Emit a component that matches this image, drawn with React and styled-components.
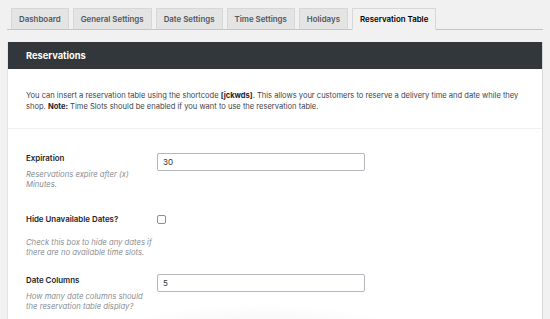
import React from "react";
import styled, { createGlobalStyle } from "styled-components";

const Global = createGlobalStyle`
  html, body { margin: 0; padding: 0; }
  body {
    background: #f1f1f1;
    font-family: Inter, "Open Sans", Roboto, sans-serif;
    color: #3c434a;
    width: 550px;
    height: 319px;
    overflow: hidden;
  }
`;

const Page = styled.div`
  padding: 8px 7px 0 7px;
`;

const TabBar = styled.div`
  display: flex;
  gap: 4px;
  padding-left: 4px;
  border-bottom: 1px solid #c3c4c7;
  height: 21px;
`;

const Tab = styled.div`
  box-sizing: border-box;
  height: 22px;
  padding: 0 7px;
  display: flex;
  align-items: center;
  font-size: 7.9px;
  font-weight: 600;
  border: 1px solid #d6d7d9;
  border-bottom-color: ${(p) => (p.$active ? "#f1f1f1" : "#c3c4c7")};
  background: ${(p) => (p.$active ? "#f1f1f1" : "#e4e4e4")};
  color: ${(p) => (p.$active ? "#000" : "#50575e")};
  white-space: nowrap;
`;

const Panel = styled.div`
  position: relative;
  margin-top: 12px;
  width: 536px;
  height: 400px;
  box-sizing: border-box;
  background: #fff;
  border-left: 1px solid #e2e4e7;
  border-right: 1px solid #d6d7d9;
  &::after {
    content: "";
    position: absolute;
    left: 0;
    right: 0;
    top: 232px;
    height: 60px;
    background: radial-gradient(ellipse 150px 30px at 250px 60px, rgba(0,0,0,0.05), rgba(0,0,0,0));
    pointer-events: none;
  }
`;

const Header = styled.div`
  height: 27px;
  background: #32373c;
  display: flex;
  align-items: center;
  padding-left: 18px;
  color: #fff;
  font-size: 9.3px;
  font-weight: 700;
`;

const Intro = styled.div`
  padding: 21px 18px 16px 18px;
  border-bottom: 1px solid #f0f0f1;
  font-size: 7.55px;
  line-height: 11px;
  color: #3c434a;
  b { font-weight: 700; color: #1d2327; }
`;

const Row = styled.div`
  display: grid;
  grid-template-columns: 131px 208px;
  padding: ${(p) => p.$top}px 18px 0 18px;
  align-items: start;
`;

const LabelCell = styled.div`
  display: flex;
  flex-direction: column;
`;

const Label = styled.div`
  font-size: 7.9px;
  line-height: 10px;
  font-weight: 600;
  color: #1d2327;
  margin-top: ${(p) => p.$offset || 0}px;
`;

const Desc = styled.div`
  margin-top: ${(p) => p.$gap}px;
  font-size: 7.7px;
  line-height: 9.5px;
  font-style: italic;
  color: #8a8d92;
  width: 126px;
`;

const Input = styled.div`
  box-sizing: border-box;
  height: 18px;
  border: 1px solid #b4b7bb;
  border-radius: 2px;
  display: flex;
  align-items: center;
  padding-left: 5px;
  font-size: 8px;
  color: #2c3338;
`;

const Checkbox = styled.div`
  box-sizing: border-box;
  width: 9px;
  height: 9px;
  margin-top: 1px;
  border: 1px solid #8c8f94;
  border-radius: 2px;
  background: #fff;
`;

const tabs = [
  "Dashboard",
  "General Settings",
  "Date Settings",
  "Time Settings",
  "Holidays",
  "Reservation Table",
];

export default function App() {
  return (
    <>
      <Global />
      <Page>
        <TabBar>
          {tabs.map((t, i) => (
            <Tab key={t} $active={i === tabs.length - 1}>
              {t}
            </Tab>
          ))}
        </TabBar>
        <Panel>
          <Header>Reservations</Header>
          <Intro>
            You can insert a reservation table using the shortcode <b>[jckwds]</b>. This allows your customers to reserve a delivery time and date while they
            <br />
            shop. <b>Note:</b> Time Slots should be enabled if you want to use the reservation table.
          </Intro>
          <Row $top={24}>
            <LabelCell>
              <Label>Expiration</Label>
              <Desc $gap={7}>Reservations expire after (x) Minutes.</Desc>
            </LabelCell>
            <Input>30</Input>
          </Row>
          <Row $top={25}>
            <LabelCell>
              <Label>Hide Unavailable Dates?</Label>
              <Desc $gap={14}>Check this box to hide any dates if there are no available time slots.</Desc>
            </LabelCell>
            <Checkbox />
          </Row>
          <Row $top={17}>
            <LabelCell>
              <Label $offset={1}>Date Columns</Label>
              <Desc $gap={7}>How many date columns should the reservation table display?</Desc>
            </LabelCell>
            <Input>5</Input>
          </Row>
        </Panel>
      </Page>
    </>
  );
}
